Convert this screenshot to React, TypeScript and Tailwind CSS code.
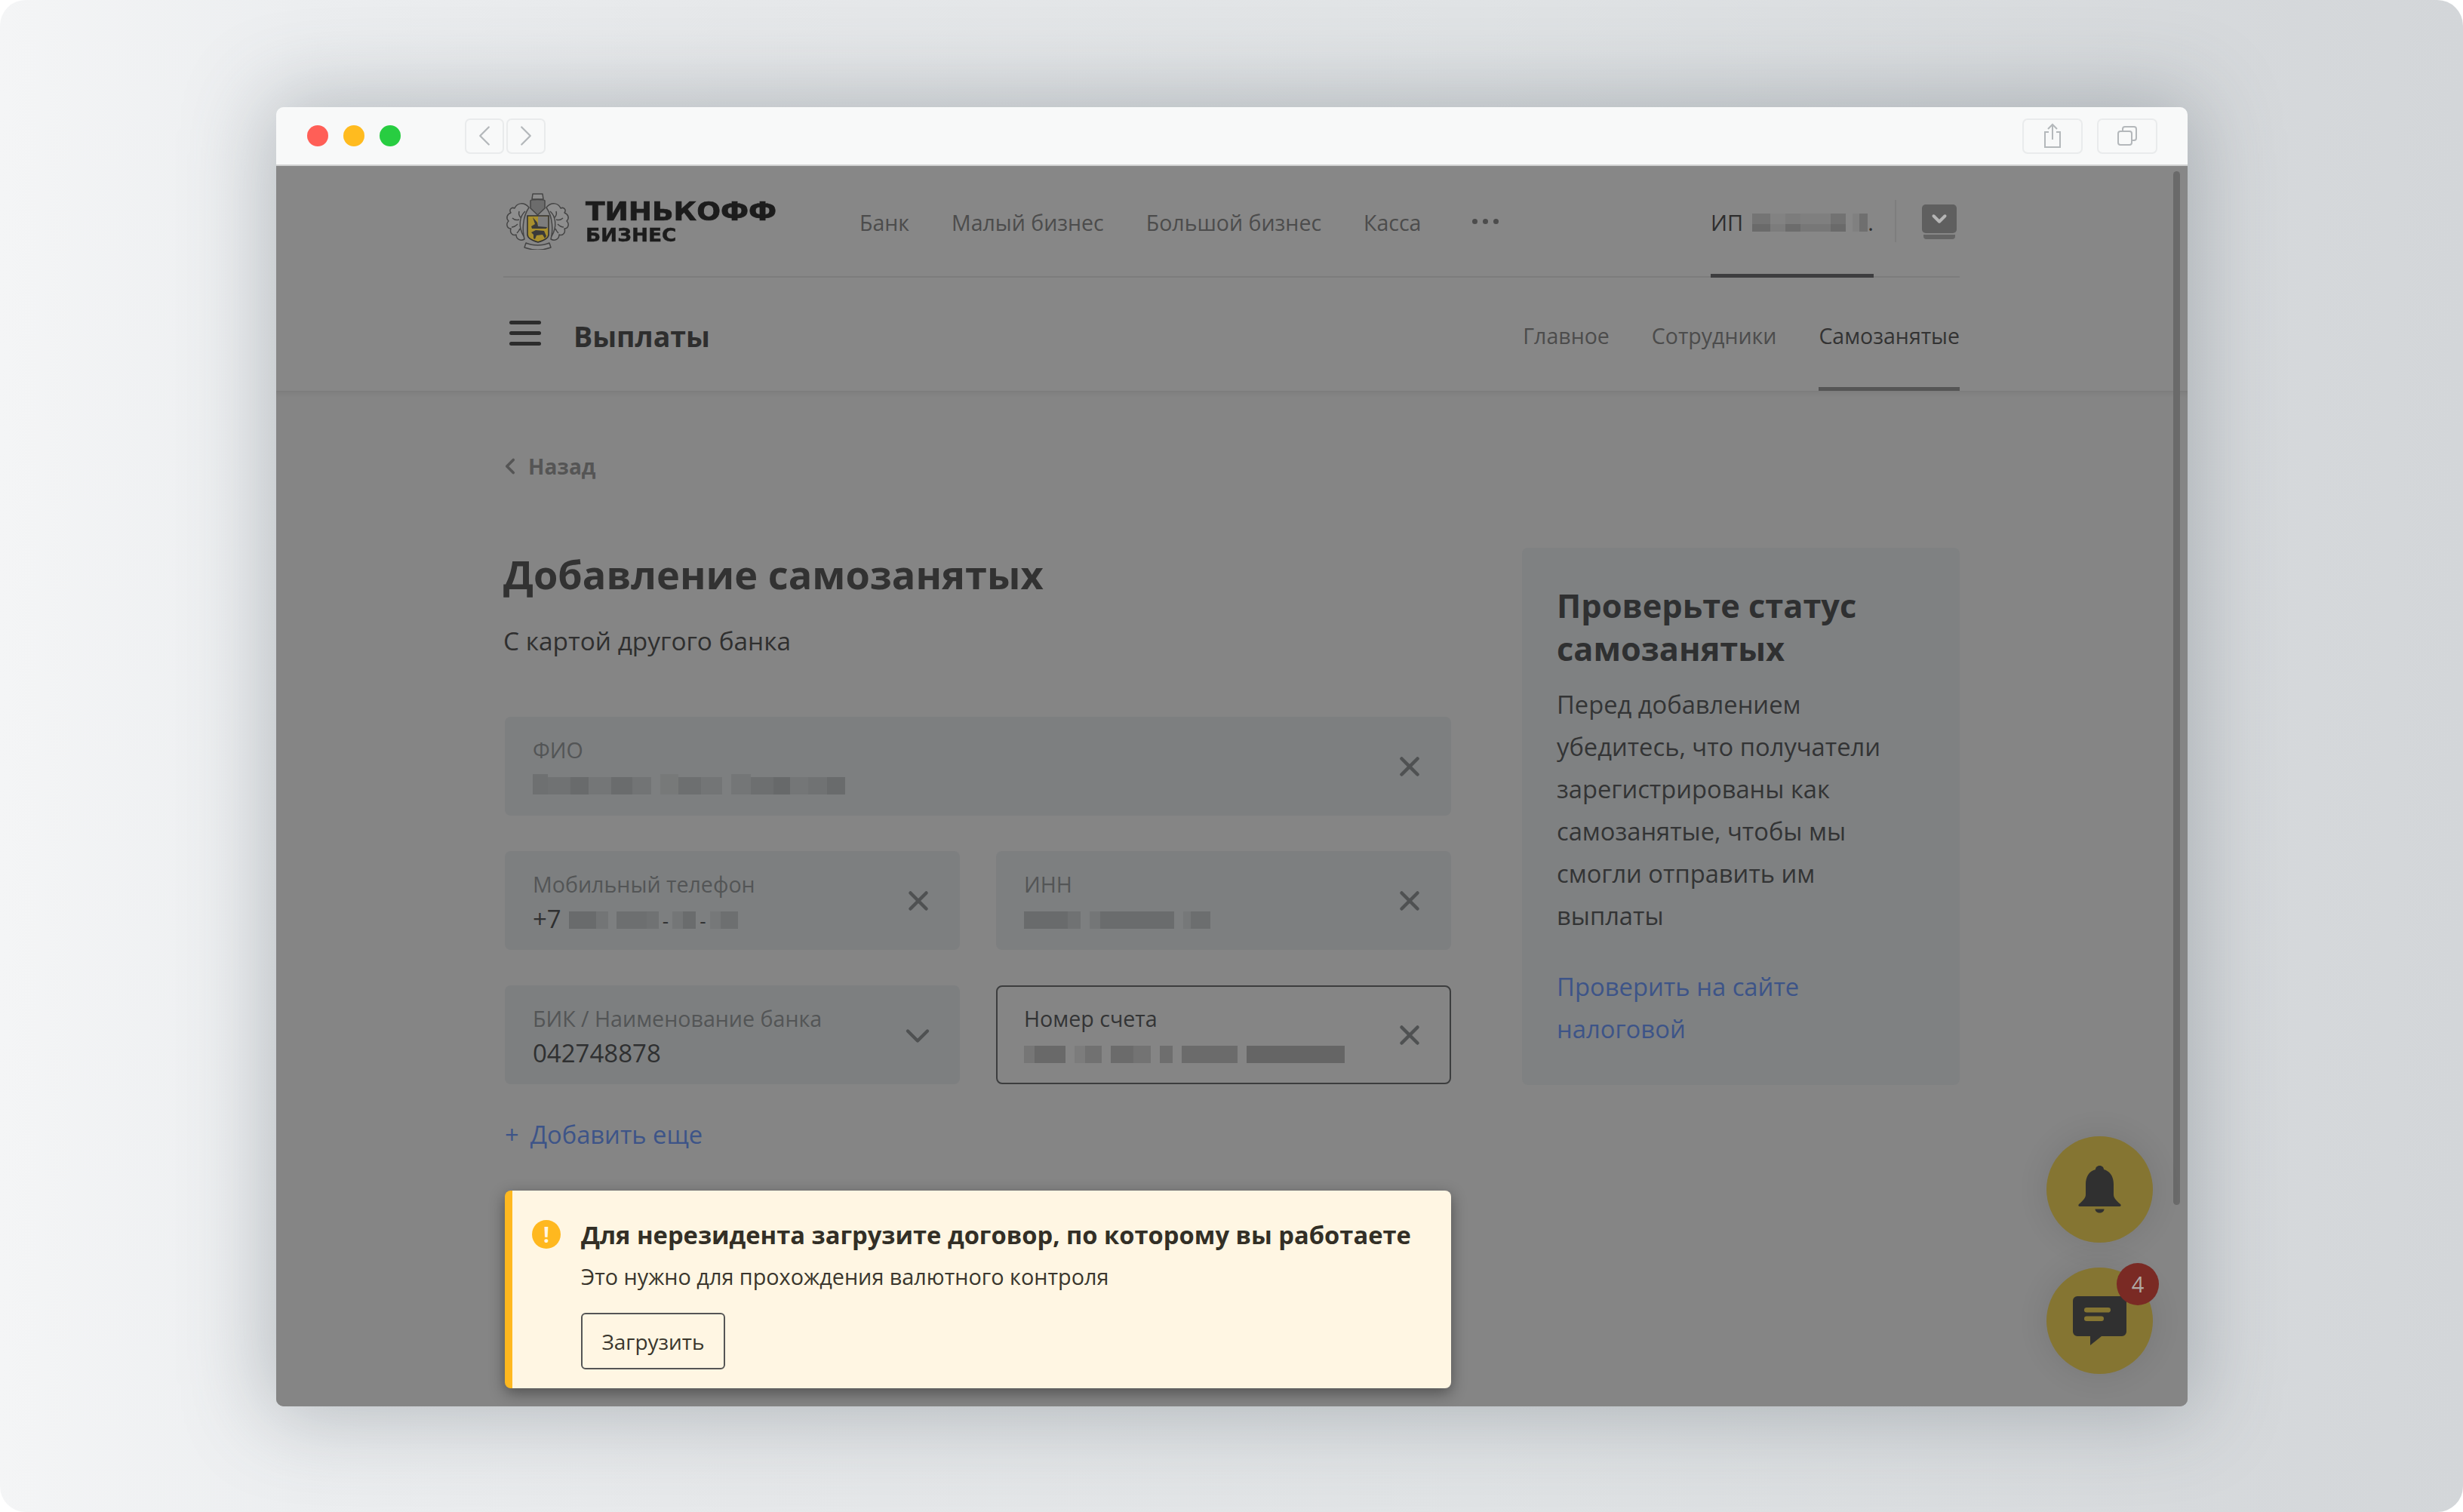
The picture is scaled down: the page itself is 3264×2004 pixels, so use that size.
import { ChevronLeft, ChevronRight, ChevronDown, X } from "lucide-react";

const fontStack = "font-['Open_Sans','Noto_Sans',sans-serif]";

const topLinks = ["Банк", "Малый бизнес", "Большой бизнес", "Касса"];

// pixelated redaction blocks: [width, shade, optional height]
type Block = [number, string, number?];

function Mosaic({ groups, className }: { groups: Block[][]; className?: string }) {
  return (
    <div className={`flex items-end gap-[12px] h-[26px] blur-[0.6px] ${className ?? ""}`}>
      {groups.map((g, i) => (
        <div key={i} className="flex items-end h-full">
          {g.map(([w, c, h], j) => (
            <div key={j} style={{ width: w, height: h ?? 23, background: c }} />
          ))}
        </div>
      ))}
    </div>
  );
}

function Field({
  label,
  value,
  blocks,
  active,
  chevron,
  children,
}: {
  label: string;
  value?: string;
  blocks?: Block[][];
  active?: boolean;
  chevron?: boolean;
  children?: React.ReactNode;
}) {
  return (
    <div
      className={`h-[131px] rounded-[8px] flex items-center justify-between ${
        active ? "border-2 border-[#3c3d3e] pl-[35px] pr-[40px]" : "bg-[#7d7f80] pl-[37px] pr-[42px]"
      }`}
    >
      <div className="flex flex-col gap-[10px] mt-[2px]">
        <div className={`text-[28.6px] leading-[36px] ${active ? "text-[#333435]" : "text-[#535556]"}`}>{label}</div>
        <div className="flex items-center h-[36px] text-[33px] leading-[36px] text-[#2f3031]">
          {value && <span>{value}</span>}
          {blocks && <Mosaic groups={blocks} />}
          {children}
        </div>
      </div>
      {chevron ? (
        <ChevronDown size={52} strokeWidth={2} className="text-[#4f5152] mr-[-12px] mt-[3px]" />
      ) : (
        <X size={42} strokeWidth={2.6} className="text-[#4f5152] mr-[-8px]" />
      )}
    </div>
  );
}

function Emblem() {
  const wing = (
    <g fill="#8e8e8e" stroke="#454545" strokeWidth="1.5" strokeLinejoin="round">
      <path d="M31 19C24 11 15 13 12 20C8 18 4 22 7 26C2 28 0 33 4 37C0 41 2 47 7 47C5 53 10 57 14 55C14 61 20 64 25 61C22 50 22 32 31 19z" />
      <path d="M26 24C19 30 16 44 24 57M18 24c-1 4 0 7 3 9M9 33c3 3 6 3 9 2M8 45c3 0 6-2 8-4M15 53c2-2 3-3 4-6" fill="none" />
    </g>
  );
  return (
    <svg width="85" height="75" viewBox="0 0 85 75" className="shrink-0 ml-[3px]">
      {wing}
      <g transform="translate(85 0) scale(-1 1)">{wing}</g>
      <g stroke="#454545" strokeWidth="1.5" strokeLinejoin="round">
        <path d="M36 1h13l1 7H35z" fill="#8e8e8e" />
        <path d="M33 10c1-2 18-2 19 0v10l-9.500 9l-9.500-9z" fill="#6c6c6c" />
        <path d="M27 66c9 4 22 4 31 0l2 6c-11 4-24 4-35 0z" fill="#8e8e8e" />
      </g>
      <path d="M29 30H57V55C57 60 50 63 43 65C36 63 29 60 29 55z" fill="#a88f2e" stroke="#333333" strokeWidth="1.600" />
      <path d="M43 31H56V46H43z" fill="#7d7d7d" />
      <path d="M34 44l5-3l-3-9l6 7l1 5l12 1l-1 2H35z" fill="#3a3a3a" />
      <path d="M34 52l6-3l11 1l3 7l-2 3l-3-5l-8 1l-2 5l-2-1l0-5z" fill="#3a3a3a" />
    </svg>
  );
}

function SafariButton({ children, className }: { children: React.ReactNode; className?: string }) {
  return (
    <div className={`h-[47px] rounded-[7px] border-2 border-[#e9ebec] flex items-center justify-center text-[#b4b8bb] ${className ?? ""}`}>
      {children}
    </div>
  );
}

export default function App() {
  return (
    <div className="w-[3264px] h-[2004px] bg-white overflow-hidden">
      <div
        className={`w-full h-full rounded-[34px] overflow-hidden pt-[142px] pl-[366px] ${fontStack}`}
        style={{ background: "linear-gradient(90deg,#f4f5f6 0%,#eceef0 12%,#e6e8ea 30%,#e0e3e5 60%,#d3d6d9 100%)" }}
      >
        <div className="relative w-[2533px] h-[1722px] rounded-[10px] overflow-hidden shadow-[0_0_110px_12px_rgba(80,90,100,0.34)] flex flex-col">
          {/* browser toolbar */}
          <div className="h-[78px] shrink-0 bg-[#f8f9f9] border-b-2 border-[#d0d1d1] flex items-center pl-[41px] pr-[40px]">
            <div className="flex gap-[20px]">
              <div className="w-[28px] h-[28px] rounded-full bg-[#ff5f57]" />
              <div className="w-[28px] h-[28px] rounded-full bg-[#ffbb1f]" />
              <div className="w-[28px] h-[28px] rounded-full bg-[#28cd41]" />
            </div>
            <div className="flex gap-[3px] ml-[85px]">
              <SafariButton className="w-[52px]"><ChevronLeft size={46} strokeWidth={1.2} /></SafariButton>
              <SafariButton className="w-[52px]"><ChevronRight size={46} strokeWidth={1.2} /></SafariButton>
            </div>
            <div className="flex gap-[19px] ml-auto">
              <SafariButton className="w-[80px]">
                <svg width="26" height="34" viewBox="0 0 26 34" fill="none" stroke="currentColor" strokeWidth="2">
                  <path d="M8 12H3v20h20V12h-5M13 22V2M7 8l6-6l6 6" />
                </svg>
              </SafariButton>
              <SafariButton className="w-[80px]">
                <svg width="28" height="28" viewBox="0 0 28 28" fill="none" stroke="currentColor" strokeWidth="2">
                  <rect x="2" y="8" width="18" height="18" rx="3" />
                  <path d="M8 8V5a3 3 0 0 1 3-3h12a3 3 0 0 1 3 3v12a3 3 0 0 1-3 3h-3" />
                </svg>
              </SafariButton>
            </div>
          </div>

          {/* dimmed page */}
          <div className="relative flex-1 bg-[#868686] overflow-hidden">
            <div className="absolute right-[10px] top-[7px] w-[9px] h-[1370px] rounded-full bg-[#6a6a6a]" />

            <div className="h-[298px] bg-[#878787]">
              <div className="w-[1930px] ml-[301px]">
                {/* top nav */}
                <div className="h-[148px] border-b-2 border-[#7c7c7c] flex items-center relative">
                  <Emblem />
                  <div className="ml-[21px] w-[250px] flex flex-col font-['DejaVu_Sans',sans-serif] font-bold text-[#1c1c1c]">
                    <span className="text-[34px] leading-[38px] origin-left scale-x-[1.1] whitespace-nowrap [-webkit-text-stroke:0.7px_#1c1c1c]">ТИНЬКОФФ</span>
                    <span className="text-[24px] leading-[26px] origin-left scale-x-[1.1] whitespace-nowrap [-webkit-text-stroke:0.4px_#1c1c1c]">БИЗНЕС</span>
                  </div>
                  <div className="flex gap-[56px] ml-[113px] mt-[4px] text-[28.5px] text-[#4c4c4c]">
                    {topLinks.map((l) => (
                      <span key={l}>{l}</span>
                    ))}
                  </div>
                  <div className="flex gap-[7px] ml-[68px]">
                    <div className="w-[7px] h-[7px] rounded-full bg-[#4c4c4c]" />
                    <div className="w-[7px] h-[7px] rounded-full bg-[#4c4c4c]" />
                    <div className="w-[7px] h-[7px] rounded-full bg-[#4c4c4c]" />
                  </div>
                  <div className="ml-auto flex items-center h-full">
                    <div className="relative h-full w-[216px] flex items-center gap-[12px] pt-[4px] text-[29px] text-[#2e2e2e]">
                      <span>ИП</span>
                      <div className="flex items-end gap-[9px] h-[24px] blur-[0.6px]">
                        <div className="flex h-full">
                          <div className="w-[24px] bg-[linear-gradient(#747474_60%,#6a6a6a_60%)]" />
                          <div className="w-[20px] bg-[linear-gradient(#828282_60%,#7c7c7c_60%)]" />
                          <div className="w-[20px] bg-[linear-gradient(#7c7c7c_60%,#6c6c6c_60%)]" />
                          <div className="w-[40px] bg-[linear-gradient(#7f7f7f_60%,#777777_60%)]" />
                          <div className="w-[20px] bg-[linear-gradient(#727272_60%,#6a6a6a_60%)]" />
                        </div>
                        <div className="flex h-full">
                          <div className="w-[9px] bg-[#808080]" />
                          <div className="w-[11px] bg-[#6f6f6f]" />
                        </div>
                      </div>
                      <span className="ml-[-12px]">.</span>
                      <div className="absolute left-0 right-0 bottom-[-2px] h-[5px] bg-[#3d3d3f]" />
                    </div>
                    <div className="w-[2px] h-[56px] bg-[#7e7e7e] ml-[28px]" />
                    <div className="ml-[34px] mr-[4px] mt-[2px] flex flex-col items-center gap-[2px]">
                      <div className="w-[46px] h-[38px] rounded-[5px] bg-[#5f5f5f] flex items-center justify-center">
                        <ChevronDown size={30} strokeWidth={3.2} className="text-[#b5b5b5]" />
                      </div>
                      <div className="w-[42px] h-[6px] rounded-b-[4px] bg-[#646464]" />
                    </div>
                  </div>
                </div>

                {/* section nav */}
                <div className="h-[150px] flex items-center">
                  <div className="flex flex-col gap-[9px] ml-[8px] mt-[-3px]">
                    <div className="w-[42px] h-[5px] rounded-full bg-[#2c2c2c]" />
                    <div className="w-[42px] h-[5px] rounded-full bg-[#2c2c2c]" />
                    <div className="w-[42px] h-[5px] rounded-full bg-[#2c2c2c]" />
                  </div>
                  <span className="ml-[43px] mt-[6px] text-[37.500px] font-bold text-[#2e2e2e]">Выплаты</span>
                  <div className="ml-auto flex h-full gap-[56px] text-[28.5px] text-[#4c4c4c]">
                    <span className="flex items-center pt-[4px]">Главное</span>
                    <span className="flex items-center pt-[4px]">Сотрудники</span>
                    <span className="flex items-center border-b-[5px] border-[#555555] pt-[9px] text-[#333333]">Самозанятые</span>
                  </div>
                </div>
              </div>
            </div>

            {/* content */}
            <div className="bg-[#858585] h-[1400px] pl-[303px] pt-[82px] shadow-[inset_0_8px_10px_-8px_rgba(0,0,0,0.12)]">
              <div className="flex items-center h-[36px] text-[#555555] text-[28px] font-bold">
                <ChevronLeft size={34} strokeWidth={2.6} className="ml-[-10px]" />
                <span className="ml-[7px]">Назад</span>
              </div>

              <div className="flex gap-[94px] mt-[90px]">
                <div className="w-[1254px]">
                  <h1 className="text-[52.300px] leading-[76px] font-bold text-[#323232] ml-[-2px] mt-[-3px]">Добавление самозанятых</h1>
                  <p className="text-[33.4px] leading-[44px] mt-[28px] ml-[-2px] text-[#2f2f2f]">С картой другого банка</p>

                  <div className="flex flex-col gap-[47px] mt-[79px]">
                    <Field
                      label="ФИО"
                      blocks={[
                        [[20, "#6e7071", 27], [30, "#707273"], [24, "#696b6c"], [30, "#747677"], [28, "#6a6c6d"], [25, "#727475"]],
                        [[24, "#777979", 27], [30, "#6d6f70"], [28, "#737576"]],
                        [[26, "#747677", 27], [30, "#6d6f70"], [22, "#67696a"], [24, "#747677"], [25, "#707273"], [24, "#696b6c"]],
                      ]}
                    />
                    <div className="grid grid-cols-2 gap-x-[48px]">
                      <Field label="Мобильный телефон">
                        <span>+7</span>
                        <div className="ml-[10px] mr-[11px]"><Mosaic groups={[[[36, "#696b6c"], [16, "#737576"]]]} /></div>
                        <Mosaic groups={[[[40, "#6d6f70"], [16, "#707273"]]]} />
                        <span className="text-[26px] mx-[5px] mt-[4px]">-</span>
                        <Mosaic groups={[[[14, "#747677"], [17, "#6a6c6d"]]]} />
                        <span className="text-[26px] mx-[5px] mt-[4px]">-</span>
                        <Mosaic groups={[[[14, "#767879"], [23, "#6d6f70"]]]} />
                      </Field>
                      <Field
                        label="ИНН"
                        blocks={[
                          [[58, "#696b6c"], [17, "#707273"]],
                          [[14, "#747677"], [98, "#6a6c6d"]],
                          [[10, "#767879"], [26, "#6c6e6f"]],
                        ]}
                      />
                    </div>
                    <div className="grid grid-cols-2 gap-x-[48px]">
                      <Field label="БИК / Наименование банка" value="042748878" chevron />
                      <Field
                        label="Номер счета"
                        active
                        blocks={[
                          [[14, "#767676"], [41, "#696969"]],
                          [[14, "#7c7c7c"], [22, "#717171"]],
                          [[30, "#6b6b6b"], [23, "#737373"]],
                          [[17, "#6e6e6e"]],
                          [[74, "#6b6b6b"]],
                          [[130, "#656565"]],
                        ]}
                      />
                    </div>
                  </div>

                  <div className="text-[32.700px] leading-[44px] text-[#3d5488] mt-[45px]">
                    <span>+</span>
                    <span className="ml-[15px]">Добавить еще</span>
                  </div>

                  <div className="flex mt-[52px] h-[262px] rounded-[8px] overflow-hidden bg-[#fff6e3] border-l-[10px] border-[#ffb81f] shadow-[0_6px_20px_rgba(0,0,0,0.4)] pl-[26px] pt-[37px]">
                    <div className="w-[38px] h-[38px] mt-[2px] rounded-full bg-[#ffb81f] flex items-center justify-center text-[#fff6e3] font-bold text-[28px] leading-none">!</div>
                    <div className="ml-[27px]">
                      <div className="text-[32.700px] leading-[44px] font-bold text-[#332f26]">Для нерезидента загрузите договор, по которому вы работаете</div>
                      <div className="text-[28.8px] leading-[40px] mt-[13px] text-[#3a362d]">Это нужно для прохождения валютного контроля</div>
                      <button className="mt-[28px] w-[191px] h-[75px] rounded-[6px] border-2 border-[#555555] text-[28px] text-[#3a362d]">Загрузить</button>
                    </div>
                  </div>
                </div>

                {/* side card */}
                <div className="w-[580px] h-[712px] rounded-[8px] bg-[#7f8182] px-[46px] pt-[48px]">
                  <div className="text-[43.3px] leading-[57px] font-bold text-[#2f3031]">Проверьте статус самозанятых</div>
                  <p className="text-[32.7px] leading-[56px] text-[#333435] mt-[18px]">Перед добавлением убедитесь, что получатели зарегистрированы как самозанятые, чтобы мы смогли отправить им выплаты</p>
                  <p className="text-[32.8px] leading-[56px] text-[#3d5488] mt-[38px]">Проверить на сайте налоговой</p>
                </div>
              </div>
            </div>

            {/* floating buttons */}
            <div className="absolute left-[2346px] top-[1286px] w-[141px] h-[141px] rounded-full bg-[#857532] flex items-center justify-center shadow-[0_0_40px_rgba(0,0,0,0.1)]">
              <svg width="57" height="63" viewBox="0 0 57 63" fill="#303030">
                <path d="M28.500 0c3.500 0 5.500 2.500 5.500 5c9 2.500 13 10 13 20v13c0 4 2 7 9 13c1 1 1 3-1 3H2c-2 0-2-2-1-3c7-6 9-9 9-13V25c0-10 4-17.500 13-20c0-2.500 2-5 5.500-5z" />
                <path d="M22.500 57.500h12c0 3-3 5-6 5s-6-2-6-5z" />
              </svg>
            </div>
            <div className="absolute left-[2346px] top-[1460px] w-[141px] h-[141px] rounded-full bg-[#857532] flex items-center justify-center shadow-[0_0_40px_rgba(0,0,0,0.1)]">
              <svg width="71" height="65" viewBox="0 0 71 65">
                <path d="M6 0h59a6 6 0 0 1 6 6v41a6 6 0 0 1-6 6H38L23 65V53H6a6 6 0 0 1-6-6V6a6 6 0 0 1 6-6z" fill="#303030" />
                <rect x="15" y="15" width="35" height="6.500" rx="3.200" fill="#857532" />
                <rect x="15" y="26.500" width="26" height="6.500" rx="3.200" fill="#857532" />
              </svg>
            </div>
            <div className="absolute left-[2439px] top-[1454px] w-[56px] h-[56px] rounded-full bg-[#7a2a24] flex items-center justify-center text-[#b0a9a5] text-[29px]">4</div>
          </div>
        </div>
      </div>
    </div>
  );
}
